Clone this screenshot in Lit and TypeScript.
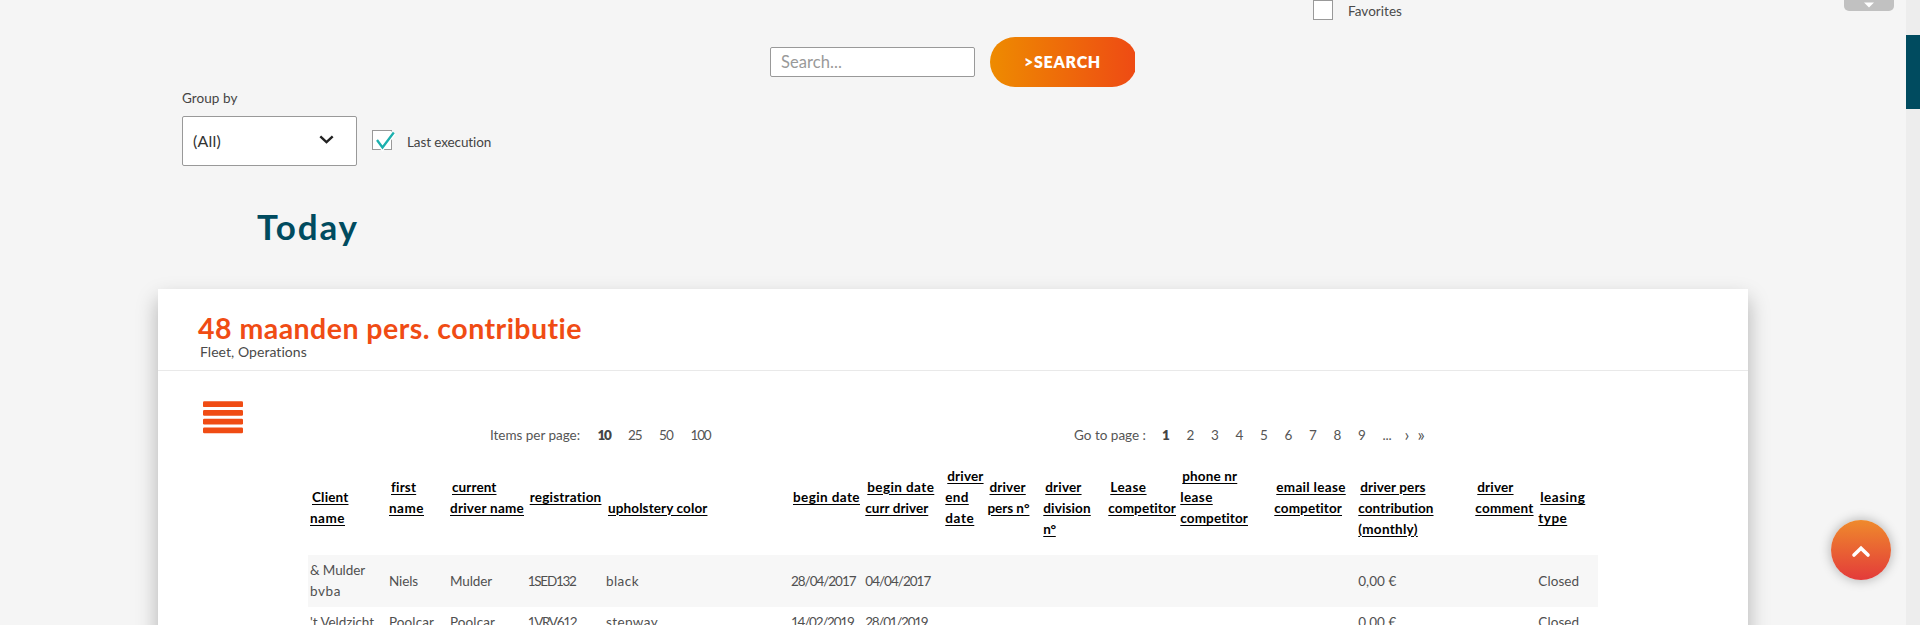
import { LitElement, html, css, svg } from "lit";
import { customElement, property } from "lit/decorators.js";

/** A single line of text tracked so that it occupies a given width. */
@customElement("fit-text")
class FitText extends LitElement {
  @property({ type: Number }) w = 0;
  @property() text = "";
  static styles = css`
    :host { display: inline-block; white-space: pre; }
    .t { display: inline-block; text-decoration: inherit; }
  `;
  render() {
    return html`<span class="t">${this.text}</span>`;
  }
  firstUpdated() {
    const el = this.renderRoot.querySelector(".t") as HTMLElement;
    const natural = el.getBoundingClientRect().width;
    if (this.w && this.text.length) {
      el.style.letterSpacing = (this.w - natural) / this.text.length + "px";
    }
  }
}

type Line = [string, number];
interface Column { width: number; head: Line[]; }

const columns: Column[] = [
  { width: 79, head: [["", 0], ["Client", 36.5], ["name", 35]] },
  { width: 61, head: [["first", 25], ["name", 35]] },
  { width: 77.7, head: [["current", 44.5], ["driver name", 74]] },
  { width: 78.3, head: [["registration", 72]] },
  { width: 185, head: [["", 0], ["upholstery color", 99.5]] },
  { width: 74.3, head: [["begin date", 67]] },
  { width: 80, head: [["begin date", 67], ["curr driver", 63]] },
  { width: 42.2, head: [["driver", 36.3], ["end", 23.5], ["date", 29]] },
  { width: 55.8, head: [["driver", 36.3], ["pers n°", 42]] },
  { width: 65, head: [["", 0], ["driver", 36.3], ["division", 47.5], ["n°", 12.5]] },
  { width: 72, head: [["Lease", 36.3], ["competitor", 68]] },
  { width: 94, head: [["phone nr", 55], ["lease", 32.5], ["competitor", 68]] },
  { width: 84, head: [["email lease", 69.5], ["competitor", 68]] },
  { width: 117, head: [["", 0], ["driver pers", 65.3], ["contribution", 75.5], ["(monthly)", 59.5]] },
  { width: 63, head: [["driver", 36.3], ["comment", 58.3]] },
  { width: 61.7, head: [["", 0], ["leasing", 45], ["type", 29]] },
];

const rows: Line[][][] = [
  [[["& Mulder", 55], ["bvba", 31]], [["Niels", 29]], [["Mulder", 42]], [["1SED132", 48]], [["black", 33]],
   [["28/04/2017", 64.5]], [["04/04/2017", 65]], [], [], [], [], [], [], [["0,00 €", 38]], [], [["Closed", 41]]],
  [[["'t Veldzicht", 64]], [["Poolcar", 45]], [["Poolcar", 45]], [["1VRV612", 48.5]], [["stepway", 52]],
   [["14/02/2019", 62.5]], [["28/01/2019", 62]], [], [], [], [], [], [], [["0,00 €", 38]], [], [["Closed", 41]]],
];

const template = columns.map((c) => c.width + "px").join(" ");
const fit = (text: string, w: number) => html`<fit-text .text=${text} .w=${w}></fit-text>`;

@customElement("app-root")
class AppRoot extends LitElement {
  static styles = css`
    * { box-sizing: border-box; }
    :host {
      display: flex; width: 1920px; height: 625px; overflow: hidden; position: relative;
      background: #f5f5f5; color: #4a4a4a;
      font: 13.5px/21px Lato, "Open Sans", sans-serif;
    }
    .main { width: 1906px; height: 625px; overflow: hidden; }
    .scroll { width: 14px; height: 625px; padding-top: 35px; background: #ededed; }
    .thumb { height: 74px; background: #004b5f; }

    .favorites { display: flex; height: 20px; padding-left: 1313px; gap: 15px; }
    .box { width: 20px; height: 20px; border: 1px solid #999; background: #fff; flex: none; }
    .favorites fit-text { margin-top: 1px; }

    .searchbar { display: flex; align-items: center; height: 50px; margin-top: 17px; padding-left: 770px; gap: 15px; }
    .input { width: 205px; height: 30px; border: 1px solid #999; border-radius: 2px; background: #fff;
      padding: 4px 0 0 10px; font-size: 16.5px; color: #999; }
    .button { width: 145px; height: 50px; overflow: hidden; }
    .pill { width: 147px; height: 50px; border-radius: 25px; padding: 14px 0 0 34px;
      background: linear-gradient(90deg, #ee8b00, #ee4a14); color: #fff; font-weight: 800; font-size: 16px; }

    .group { padding: 1px 0 0 182px; height: 29px; color: #444; }
    .filters { display: flex; align-items: center; height: 50px; padding-left: 182px; gap: 15px; color: #444; }
    .select { display: flex; justify-content: space-between; align-items: center; width: 175px; height: 50px;
      border: 1px solid #999; border-radius: 2px; background: #fff; padding: 0 22px 2px 10px; font-size: 16px; color: #333; }
    .select svg { margin-top: -1px; }
    .check { display: flex; gap: 15px; }
    .check svg { display: block; margin: 0 0 0 2px; overflow: visible; }
    .check fit-text { margin-top: 2px; }

    .today { margin: 37px 0 0 257px; height: 86px; font-weight: 700; font-size: 35px; line-height: 46px; color: #004b5f; }

    .card { width: 1590px; height: 420px; margin-left: 158px; background: #fff; box-shadow: 0 10px 20px rgba(0,0,0,.28); }
    .cardhead { height: 82px; border-bottom: 1px solid #e9e9e9; padding: 24px 0 0 40px; }
    .title { font-weight: 700; font-size: 28.5px; line-height: 30px; height: 28px; color: #f04c14; }
    .tags { padding-left: 2px; font-size: 14px; }
    .tools { height: 69px; padding: 30px 0 0 45px; display: flex; align-items: flex-start; }
    .menu { display: block; flex: none; }
    .pager { display: flex; padding-top: 24px; color: #555; }
    .items { flex: none; width: 584px; padding-left: 247px; display: flex; gap: 17.5px; }
    .pages { padding-left: 247px; display: flex; }
    .label { width: 88px; }
    .num { width: 24.5px; }
    .dots { width: 22px; }
    .next { width: 13px; }
    .arrow { font-size: 17px; line-height: 19px; }
    .on { font-weight: 800; color: #444; }

    .table { margin-left: 150px; width: 1290px; }
    .row { display: grid; align-items: center; }
    .thead { height: 115px; color: #000; font-weight: 700; }
    .band { background: #f7f7f7; height: 52px; }
    .plain { height: 31px; }
    .cell { padding-left: 2px; color: #505050; }
    .thead .cell { color: #000; }
    .line { height: 21px; white-space: nowrap; }
    .thead .line { text-decoration: underline; text-decoration-thickness: 1px; text-underline-offset: 2px; }
    .thead .line fit-text { text-decoration: inherit; }
    .lead { padding-left: 2px; }

    .tab { position: absolute; left: 1844px; top: 0; width: 50px; height: 11px; background: #c1c1c1; border-radius: 0 0 5px 5px; }
    .tab svg { display: block; margin: 2px auto 0; }
    .top { position: absolute; left: 1831px; top: 520px; width: 60px; height: 60px; border-radius: 50%;
      background: linear-gradient(#ef8a2c, #e33b3a); box-shadow: 0 0 12px rgba(0,0,0,.3); }
    .top svg { display: block; margin: 25px auto 0; }
  `;

  private head(c: Column) {
    const first = c.head.findIndex((l) => l[0] !== "");
    return html`<div class="cell">${c.head.map(
      (l, i) => html`<div class="line ${i === first ? "lead" : ""}">${l[0] ? fit(l[0], l[1]) : ""}</div>`
    )}</div>`;
  }

  render() {
    return html`
      <div class="main">
        <div class="favorites"><div class="box"></div>${fit("Favorites", 54)}</div>
        <div class="searchbar">
          <div class="input">${fit("Search...", 61)}</div>
          <div class="button"><div class="pill">${fit(">SEARCH", 77)}</div></div>
        </div>
        <div class="group">${fit("Group by", 55.5)}</div>
        <div class="filters">
          <div class="select">${fit("(All)", 28)}
            <svg width="15" height="10" viewBox="0 0 15 10"><path d="M1.3 1.3 L7.5 7.2 L13.7 1.3" fill="none" stroke="#222" stroke-width="2.4"/></svg>
          </div>
          <div class="check">
            <div class="box"><svg width="20" height="20" viewBox="0 0 20 20">
              <path d="M2 9 L7.5 16.5 L18.8 1.5" fill="none" stroke="#fff" stroke-width="5"/>
              <path d="M2 9 L7.5 16.5 L18.8 1.5" fill="none" stroke="#1cb0ae" stroke-width="2.3"/></svg></div>
            ${fit("Last execution", 84.5)}
          </div>
        </div>
        <div class="today">${fit("Today", 102)}</div>
        <div class="card">
          <div class="cardhead">
            <div class="title">${fit("48 maanden pers. contributie", 384.5)}</div>
            <div class="tags">${fit("Fleet, Operations", 107)}</div>
          </div>
          <div class="tools">
            <svg class="menu" width="40" height="33" viewBox="0 0 40 33">${[0.3, 9, 17.7, 26.4].map(
              (y) => svg`<rect x="0" y=${y} width="40" height="5.8" rx="1.2" fill="#f04c14"/>`
            )}</svg>
            <div class="pager">
              <div class="items">
                ${fit("Items per page:", 90)}<span class="on">${fit("10", 13)}</span>${fit("25", 13.5)}${fit("50", 14)}${fit("100", 20)}
              </div>
              <div class="pages">
                <div class="label">${fit("Go to page :", 72)}</div>
                ${["1", "2", "3", "4", "5", "6", "7", "8", "9"].map(
                  (n) => html`<div class="num ${n === "1" ? "on" : ""}">${n}</div>`
                )}
                <div class="dots">${fit("...", 9)}</div><div class="next arrow">›</div><div class="arrow">»</div>
              </div>
            </div>
          </div>
          <div class="table">
            <div class="row thead" style="grid-template-columns:${template}">${columns.map((c) => this.head(c))}</div>
            ${rows.map(
              (r, i) => html`<div class="row ${i ? "plain" : "band"}" style="grid-template-columns:${template}">
                ${r.map((c) => html`<div class="cell">${c.map((l) => html`<div class="line">${fit(l[0], l[1])}</div>`)}</div>`)}
              </div>`
            )}
          </div>
        </div>
      </div>
      <div class="scroll"><div class="thumb"></div></div>
      <div class="tab"><svg width="10" height="6" viewBox="0 0 10 6"><path d="M0 0.5 H10 L5 5.5 Z" fill="#fff"/></svg></div>
      <div class="top"><svg width="20" height="13" viewBox="0 0 20 13"><path d="M3 10 L10 3.2 L17 10" fill="none" stroke="#fff" stroke-width="3.6" stroke-linecap="round"/></svg></div>
    `;
  }
}
